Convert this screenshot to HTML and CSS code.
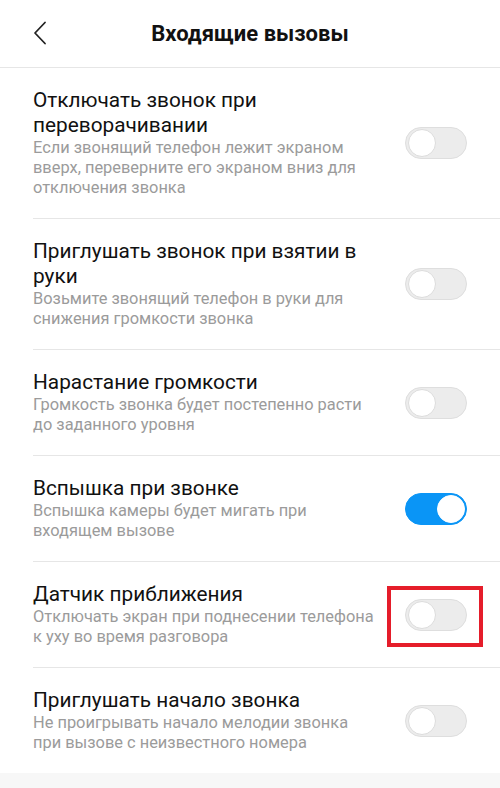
FILE: index.html
```html
<!DOCTYPE html>
<html lang="ru">
<head>
<meta charset="utf-8">
<link rel="stylesheet" href="styles.css">
</head>
<body>
<div class="screen">
  <header class="header">
    <svg class="back" width="14" height="24" viewBox="0 0 14 24"><path d="M12 1.5 L2 12 L12 22.5" fill="none" stroke="#222" stroke-width="1.8" stroke-linecap="round" stroke-linejoin="round"/></svg>
    <h1 class="title">Входящие вызовы</h1>
  </header>
  <ul class="list">
    <li class="item">
      <div class="text">
        <div class="name">Отключать звонок при переворачивании</div>
        <div class="desc">Если звонящий телефон лежит экраном вверх, переверните его экраном вниз для отключения звонка</div>
      </div>
      <div class="switch"><span class="knob"></span></div>
    </li>
    <li class="item">
      <div class="text">
        <div class="name">Приглушать звонок при взятии в руки</div>
        <div class="desc">Возьмите звонящий телефон в руки для снижения громкости звонка</div>
      </div>
      <div class="switch"><span class="knob"></span></div>
    </li>
    <li class="item">
      <div class="text">
        <div class="name">Нарастание громкости</div>
        <div class="desc">Громкость звонка будет постепенно расти до заданного уровня</div>
      </div>
      <div class="switch"><span class="knob"></span></div>
    </li>
    <li class="item">
      <div class="text">
        <div class="name">Вспышка при звонке</div>
        <div class="desc">Вспышка камеры будет мигать при входящем вызове</div>
      </div>
      <div class="switch on"><span class="knob"></span></div>
    </li>
    <li class="item">
      <div class="text">
        <div class="name">Датчик приближения</div>
        <div class="desc">Отключать экран при поднесении телефона к уху во время разговора</div>
      </div>
      <div class="switch highlighted"><span class="knob"></span></div>
    </li>
    <li class="item last">
      <div class="text">
        <div class="name">Приглушать начало звонка</div>
        <div class="desc">Не проигрывать начало мелодии звонка при вызове с неизвестного номера</div>
      </div>
      <div class="switch"><span class="knob"></span></div>
    </li>
  </ul>
  <div class="footer"></div>
</div>
</body>
</html>
```
FILE: styles.css
```css
*, *::before, *::after { box-sizing: border-box; }
html, body { margin: 0; padding: 0; background: #fff; }
body { font-family: Roboto, "Noto Sans", sans-serif; width: 500px; height: 788px; overflow: hidden; }
.screen { display: flex; flex-direction: column; height: 788px; }
.header {
  position: relative;
  height: 68px;
  border-bottom: 1px solid #e6e6e6;
  display: flex;
  align-items: center;
  justify-content: center;
}
.back { position: absolute; left: 33px; top: 21px; }
.title { margin: 0; font-size: 22px; font-weight: 700; color: #111; padding-bottom: 1px; }
.list { list-style: none; margin: 0; padding: 0; }
.item {
  display: flex;
  align-items: center;
  margin-left: 33px;
  padding: 20px 33px 20px 0;
  border-bottom: 1px solid #e6e6e6;
}
.item.last { border-bottom: none; }
.text { width: 347px; margin-right: 25px; }
.name { font-size: 20.8px; line-height: 25px; color: #111; }
.desc { font-size: 16.4px; line-height: 20px; color: #9b9b9b; }
.switch {
  position: relative;
  width: 62px;
  height: 32px;
  border-radius: 16px;
  background: #ececec;
  border: 1px solid #dedede;
  flex: none;
}
.knob {
  position: absolute;
  left: 2px;
  top: 1px;
  width: 28px;
  height: 28px;
  border-radius: 50%;
  background: #fff;
  border: 1px solid #dcdcdc;
}
.switch.on { background: #0a95f6; border-color: #0a95f6; }
.switch.on .knob { left: auto; right: 1px; border-color: #fff; }
.switch.highlighted::after {
  content: "";
  position: absolute;
  left: -19px;
  top: -14px;
  width: 96px;
  height: 61px;
  border: 4px solid #e51d2a;
}
.footer { flex: 1; background: #f7f7f7; }
```
